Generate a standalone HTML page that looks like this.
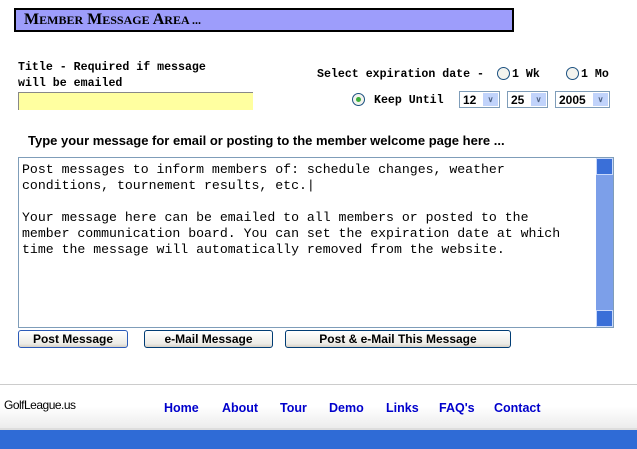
<!DOCTYPE html>
<html><head><style>
body{margin:0;width:637px;height:449px;position:relative;background:#fff;overflow:hidden;font-family:"Liberation Sans",sans-serif}
.a{position:absolute}
.mono{font-family:"Liberation Mono",monospace;font-weight:bold;font-size:11.6px;color:#000}
.hdr{left:14px;top:8px;width:488px;height:20px;background:#9d9dfb;border:2px solid #000;font-family:"Liberation Serif",serif;font-weight:bold;font-size:16px;line-height:20px;padding-left:8px;box-sizing:content-box}
.sel{height:17px;border:1px solid #7f9db9;font-family:"Liberation Sans",sans-serif;font-weight:bold;font-size:12px;line-height:17px;padding-left:3px;box-sizing:border-box;background:#fff}
.sel i{position:absolute;right:1px;top:1px;width:15px;height:13px;background:#c1d3fb;font-style:normal;font-size:8px;color:#4d6185;text-align:center;line-height:13px}
.rad{width:11px;height:11px;border:1px solid #1c5180;border-radius:50%;background:#f3f3ee}
.btn{height:18px;border:1px solid #003c74;border-radius:3px;background:linear-gradient(#fff,#ecebe6 80%,#d6d0c5);font-size:12px;font-weight:bold;text-align:center;line-height:17px;box-sizing:border-box}
.nav{font-size:12.5px;font-weight:bold;color:#0000cc;top:401px}
</style></head><body>
<div class="a hdr"><span>M</span><span style="font-size:12px">EMBER</span> <span>M</span><span style="font-size:12px">ESSAGE</span> <span>A</span><span style="font-size:12px">REA ...</span></div>
<div class="a mono" style="left:18px;top:60px;line-height:16px">Title - Required if message<br>will be emailed</div>
<div class="a" style="left:18px;top:92px;width:235px;height:18px;background:#ffffa0;border-top:1px solid #888;border-left:1px solid #888;box-sizing:border-box"></div>
<div class="a mono" style="left:317px;top:68px">Select expiration date -</div>
<div class="a rad" style="left:497px;top:67px"></div><div class="a mono" style="left:512px;top:68px">1 Wk</div>
<div class="a rad" style="left:566px;top:67px"></div><div class="a mono" style="left:581px;top:68px">1 Mo</div>
<div class="a rad" style="left:352px;top:93px"><div style="margin:3px;width:5px;height:5px;border-radius:50%;background:#3cad3c"></div></div>
<div class="a mono" style="left:374px;top:94px">Keep Until</div>
<div class="a sel" style="left:459px;top:91px;width:41px">12<i>&#8744;</i></div>
<div class="a sel" style="left:507px;top:91px;width:41px">25<i>&#8744;</i></div>
<div class="a sel" style="left:555px;top:91px;width:55px">2005<i>&#8744;</i></div>
<div class="a" style="left:28px;top:133px;font-size:13px;font-weight:bold">Type your message for email or posting to the member welcome page here ...</div>
<div class="a" style="left:18px;top:157px;width:596px;height:171px;border:1px solid #7f9db9;box-sizing:border-box"></div>
<div class="a" style="left:22px;top:162px;font-family:'Liberation Mono',monospace;font-size:13.2px;line-height:16px;white-space:pre">Post messages to inform members of: schedule changes, weather
conditions, tournement results, etc.|

Your message here can be emailed to all members or posted to the
member communication board. You can set the expiration date at which
time the message will automatically removed from the website.</div>
<div class="a" style="left:596px;top:158px;width:17px;height:169px;background:#7c9fe9"></div>
<div class="a" style="left:596px;top:158px;width:17px;height:17px;background:#3a6fd8;border:1px solid #c8d8fb;box-sizing:border-box"></div>
<div class="a" style="left:596px;top:310px;width:17px;height:17px;background:#3a6fd8;border:1px solid #c8d8fb;box-sizing:border-box"></div>
<div class="a btn" style="left:18px;top:330px;width:110px;border-color:#2a5ab8">Post Message</div>
<div class="a btn" style="left:144px;top:330px;width:129px">e-Mail Message</div>
<div class="a btn" style="left:285px;top:330px;width:226px">Post &amp; e-Mail This Message</div>
<div class="a" style="left:0;top:384px;width:637px;height:1px;background:#ccc"></div>
<div class="a" style="left:0;top:385px;width:637px;height:43px;background:linear-gradient(#fff 50%,#ececec)"></div>
<div class="a" style="left:0;top:428px;width:637px;height:2px;background:#ddd"></div>
<div class="a" style="left:0;top:430px;width:637px;height:19px;background:#2f6bd6"></div>
<div class="a" style="left:4px;top:398px;font-size:12px;color:#000;letter-spacing:-0.5px">GolfLeague.us</div>
<div class="a nav" style="left:164px">Home</div>
<div class="a nav" style="left:222px">About</div>
<div class="a nav" style="left:280px">Tour</div>
<div class="a nav" style="left:329px">Demo</div>
<div class="a nav" style="left:386px">Links</div>
<div class="a nav" style="left:439px">FAQ's</div>
<div class="a nav" style="left:494px">Contact</div>
</body></html>
